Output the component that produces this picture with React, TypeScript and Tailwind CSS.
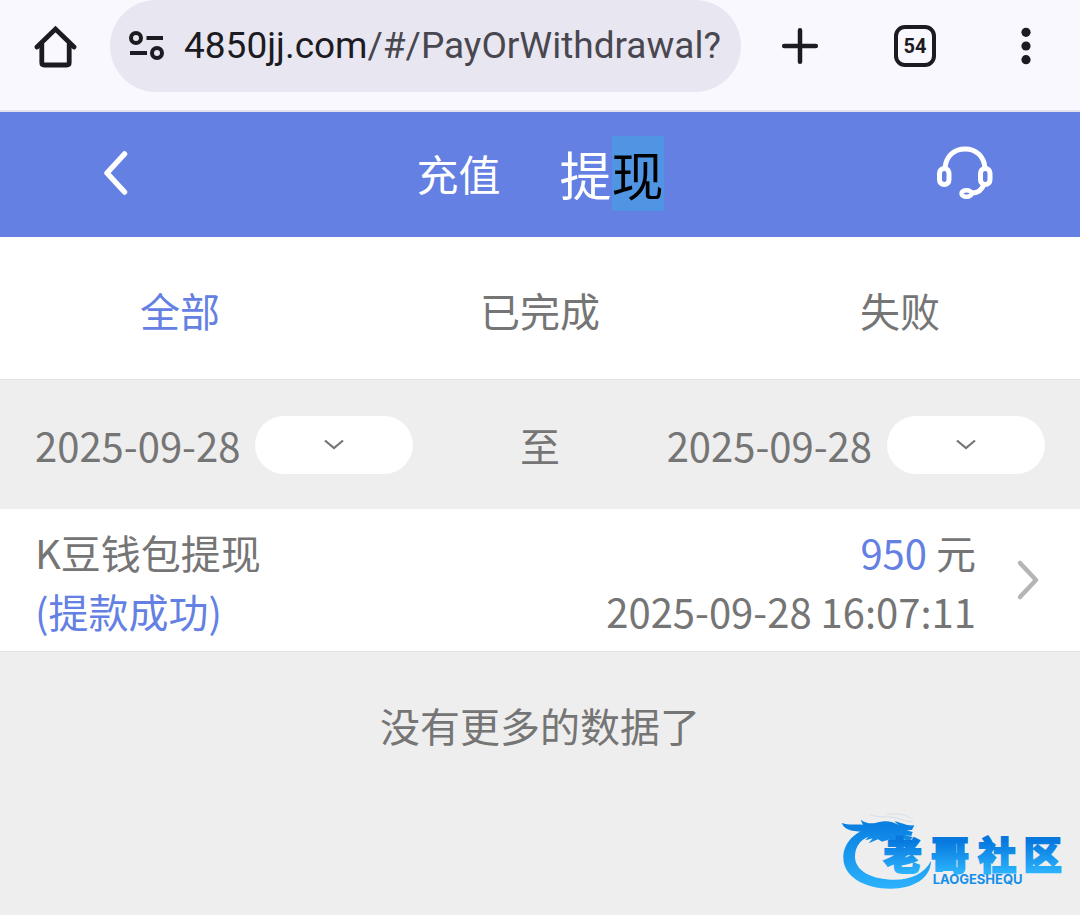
import React, { useState } from 'react';

interface WithdrawRecord {
  id: number;
  title: string;
  status: string;
  amount: number;
  time: string;
}

const TABS = ['全部', '已完成', '失败'];

const DATES = ['2025-09-28', '2025-09-27', '2025-09-26', '2025-09-25'];

const RECORDS: WithdrawRecord[] = [
  { id: 1, title: 'K豆钱包提现', status: '提款成功', amount: 950, time: '2025-09-28 16:07:11' },
];

const BrowserBar: React.FC = () => (
  <div className="flex items-start border-b-2 border-[#e4e1ee] bg-[#f9f8ff] pb-[18px] font-[Roboto,sans-serif] text-[#1b1b21]">
    <button aria-label="Home" className="flex h-[92px] w-[110px] shrink-0 items-center justify-center">
      <svg width="44" height="44" viewBox="0 0 44 44" fill="none" stroke="currentColor" strokeWidth="4.8" strokeLinecap="round" strokeLinejoin="round">
        <path d="M4 23 22.500 5l18.500 18" strokeLinejoin="miter" />
        <path d="M8.800 20v18.500q0 2.500 2.500 2.500h22.400q2.500 0 2.500-2.500V20" />
      </svg>
    </button>

    <button className="flex h-[92px] min-w-0 flex-1 items-center gap-5 rounded-full bg-[#e8e6f1] pl-[18px] pr-3">
      <svg className="shrink-0" width="36" height="32" viewBox="0 0 36 32" fill="none" stroke="currentColor" strokeWidth="4">
        <circle cx="8" cy="8" r="5" />
        <path d="M18.500 8H35M2 23h17" />
        <circle cx="29" cy="23" r="5" />
      </svg>
      <span className="whitespace-nowrap text-[37px] leading-[48px]">
        4850jj.com<span className="text-[#484750]">/#/PayOrWithdrawal?</span>
      </span>
    </button>

    <button aria-label="New tab" className="flex h-[92px] w-[118px] shrink-0 items-center justify-center">
      <svg width="38" height="38" viewBox="0 0 38 38" stroke="currentColor" strokeWidth="4.500" strokeLinecap="round">
        <path d="M19 3.200v31.600M3.200 19h31.600" />
      </svg>
    </button>
    <button aria-label="Tabs" className="flex h-[92px] w-[112px] shrink-0 items-center justify-center">
      <span className="flex size-[42px] items-center justify-center rounded-[11px] border-4 border-[#1b1b21] text-xl font-bold">
        54
      </span>
    </button>
    <button aria-label="Menu" className="flex h-[92px] w-[109px] shrink-0 items-center justify-center">
      <svg width="10" height="38" viewBox="0 0 10 38" fill="currentColor">
        <circle cx="5" cy="5.300" r="4.600" />
        <circle cx="5" cy="19" r="4.600" />
        <circle cx="5" cy="32.700" r="4.600" />
      </svg>
    </button>
  </div>
);

const Header: React.FC = () => (
  <header className="flex h-[125px] items-center bg-[#6480e3] pb-[3px] text-white">
    <button aria-label="返回" className="flex w-[230px] shrink-0 justify-center">
      <svg width="26" height="46" viewBox="0 0 26 46" fill="none" stroke="currentColor" strokeWidth="5.500" strokeLinecap="round" strokeLinejoin="round">
        <path d="M22.500 4 5 23l17.500 19" />
      </svg>
    </button>
    <nav className="flex flex-1 items-center justify-center gap-[59px]">
      <a href="#recharge" className="text-[42px] leading-[60px]">充值</a>
      <a href="#withdraw" className="text-[52px] leading-[75px]">
        提<mark className="inline-block bg-[#5095e4] text-black">现</mark>
      </a>
    </nav>
    <button aria-label="客服" className="flex w-[230px] shrink-0 justify-center">
      <svg width="58" height="54" viewBox="0 0 58 54" fill="none" stroke="currentColor" strokeWidth="5">
        <path d="M9 22C10 10 18 3 29 3s19 7 20 19" />
        <rect x="3.500" y="22.500" width="9.500" height="16" rx="4.700" />
        <rect x="44.500" y="22.500" width="9.500" height="16" rx="4.700" />
        <path d="M48 38c-2 6-6 9-12 9" strokeWidth="5" />
        <ellipse cx="30.500" cy="47.500" rx="5" ry="3.300" strokeWidth="4.500" />
      </svg>
    </button>
  </header>
);

interface DatePickerProps {
  label: string;
  value: string;
  onChange: (date: string) => void;
}

const DatePicker: React.FC<DatePickerProps> = ({ label, value, onChange }) => (
  <label className="flex items-center gap-[15px]">
    <span className="whitespace-nowrap">{value}</span>
    <span className="grid w-[158px] items-center justify-items-center">
      <select
        aria-label={label}
        value=""
        onChange={(e) => onChange(e.target.value)}
        className="col-start-1 row-start-1 h-[58px] w-full appearance-none rounded-full bg-white text-2xl"
      >
        <option value="" hidden></option>
        {DATES.map((date) => (
          <option key={date} value={date}>{date}</option>
        ))}
      </select>
      <svg className="pointer-events-none col-start-1 row-start-1" width="20" height="12" viewBox="0 0 20 12" fill="none" stroke="currentColor" strokeWidth="2.200">
        <path d="m1 1.500 9 7.500 9-7.500" />
      </svg>
    </span>
  </label>
);

const RecordRow: React.FC<{ record: WithdrawRecord }> = ({ record }) => (
  <a href={`#record-${record.id}`} className="flex items-center border-b border-[#e3e3e3] bg-white pb-[10px] pl-[35px] pr-10 pt-[14px] leading-[59px]">
    <div>
      <div>{record.title}</div>
      <div className="text-[#6480e3]">({record.status})</div>
    </div>
    <div className="ml-auto text-right">
      <div>
        <span className="text-[#6480e3]">{record.amount}</span> 元
      </div>
      <div>{record.time}</div>
    </div>
    <svg className="ml-10 shrink-0" width="24" height="46" viewBox="0 0 24 46" fill="none" stroke="#b5b5b5" strokeWidth="4.500" strokeLinecap="round" strokeLinejoin="round">
      <path d="m4 4 16 17L4 38" />
    </svg>
  </a>
);

const LOGO_CHARS = [
  { char: '老', x: 218 },
  { char: '哥', x: 360 },
  { char: '社', x: 502 },
  { char: '区', x: 638 },
];

const Logo: React.FC = () => (
  <svg width="250" height="100" viewBox="0 0 750 300" role="img" aria-label="老哥社区">
    <defs>
      <linearGradient id="ring" gradientUnits="userSpaceOnUse" x1="0" y1="50" x2="0" y2="250">
        <stop offset="0" stopColor="#087de0" />
        <stop offset="1" stopColor="#2bb2fc" />
      </linearGradient>
      <linearGradient id="name" gradientUnits="userSpaceOnUse" x1="0" y1="108" x2="0" y2="202">
        <stop offset="0" stopColor="#0678de" />
        <stop offset="1" stopColor="#2bb2fc" />
      </linearGradient>
    </defs>
    <path
      fill="url(#ring)"
      d="M118 70C64 84 40 122 40 158c0 56 62 93 142 93 70 0 121-33 121-84-18 38-60 57-108 57-72 0-120-28-120-69 0-34 22-57 54-64z"
    />
    {/* dragon head */}
    <path
      fill="url(#ring)"
      d="M35 54c22 8 42 3 64 5l-7-15c20 14 36 12 56 7 22-6 42 0 58 9l-13-11c24 5 36 14 60 12l-7 14-16 1 18 5-4 12-22-3 26 6-8 12-24-6-18 8-22-6-20 6-12-7-28 12 12-15-22 6 12-15-22-10-22-3c-18-2-32-8-39-24z"
    />
    <g fill="none" stroke="#d5e0ea" strokeWidth="3">
      <path d="M118 28c28 12 60 4 84 12 20 6 32 10 46 10M170 28c32-4 62 0 78 16" />
    </g>
    <g fill="url(#name)" stroke="url(#name)" strokeWidth="6" fontFamily="'Noto Sans CJK SC', sans-serif" fontWeight="900" fontSize="114" textAnchor="middle">
      {LOGO_CHARS.map(({ char, x }) => (
        <text key={char} x={x} y="192">{char}</text>
      ))}
    </g>
    <text x="308" y="238" fill="#168fe8" fontFamily="Inter, sans-serif" fontWeight="700" fontSize="39">
      LAOGESHEQU
    </text>
  </svg>
);

const App: React.FC = () => {
  const [activeTab, setActiveTab] = useState<string>(TABS[0]);
  const [startDate, setStartDate] = useState<string>(DATES[0]);
  const [endDate, setEndDate] = useState<string>(DATES[0]);

  return (
    <div className="flex min-h-screen flex-col bg-[#eeeeee] font-['Noto_Sans_CJK_SC',sans-serif] text-[40px] text-[#757575]">
      <BrowserBar />
      <Header />

      <div className="grid grid-cols-3 border-b border-[#e3e3e3] bg-white">
        {TABS.map((tab) => (
          <button
            key={tab}
            onClick={() => setActiveTab(tab)}
            className={`h-[142px] pt-[3px] ${activeTab === tab ? 'text-[#6480e3]' : 'text-[#757575]'}`}
          >
            {tab}
          </button>
        ))}
      </div>

      <div className="flex items-center justify-between px-[35px] pb-[35px] pt-9 leading-[58px]">
        <DatePicker label="开始日期" value={startDate} onChange={setStartDate} />
        <span>至</span>
        <DatePicker label="结束日期" value={endDate} onChange={setEndDate} />
      </div>

      {RECORDS.map((record) => (
        <RecordRow key={record.id} record={record} />
      ))}

      <p className="pt-11 text-center leading-[58px]">没有更多的数据了</p>

      <footer className="mt-auto flex justify-end pb-[10px]">
        <Logo />
      </footer>
    </div>
  );
};

export default App;
